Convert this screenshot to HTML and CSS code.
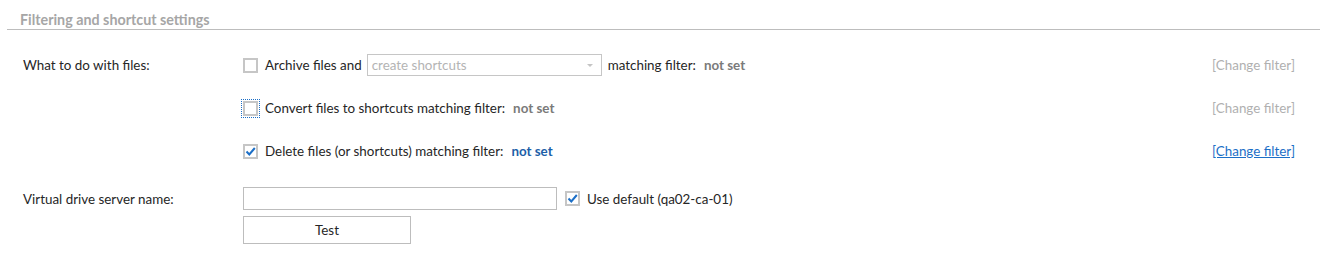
FILE: index.html
```html
<!DOCTYPE html>
<html lang="en">
<head>
    <meta charset="utf-8">
    <title>Filtering and shortcut settings</title>
    <link rel="stylesheet" href="styles.css">
</head>
<body>
    <div class="section-title">Filtering and shortcut settings</div>
    <div class="form">
        <div class="row">
            <div class="label">What to do with files:</div>
            <div class="field">
                <span class="check"></span>
                <span>Archive files and</span>
                <div class="select">
                    <span>create shortcuts</span>
                    <span class="arrow"></span>
                </div>
                <span>matching filter:</span>
                <b class="value">not set</b>
            </div>
            <a class="link disabled">[Change filter]</a>
        </div>
        <div class="row">
            <div class="label"></div>
            <div class="field">
                <span class="check focused"></span>
                <span>Convert files to shortcuts matching filter:</span>
                <b class="value">not set</b>
            </div>
            <a class="link disabled">[Change filter]</a>
        </div>
        <div class="row">
            <div class="label"></div>
            <div class="field">
                <span class="check checked">
                    <svg width="11" height="11" viewBox="0 0 11 11"><path d="M1.5 5.5 L4.3 8.5 L9.8 2" fill="none" stroke="#1c6fc7" stroke-width="2"/></svg>
                </span>
                <span>Delete files (or shortcuts) matching filter:</span>
                <b class="value active">not set</b>
            </div>
            <a class="link" href="#">[Change filter]</a>
        </div>

        <div class="row server">
            <div class="label">Virtual drive server name:</div>
            <div class="field">
                <input class="text" type="text">
                <span class="check checked">
                    <svg width="11" height="11" viewBox="0 0 11 11"><path d="M1.5 5.5 L4.3 8.5 L9.8 2" fill="none" stroke="#1c6fc7" stroke-width="2"/></svg>
                </span>
                <span>Use default (qa02-ca-01)</span>
            </div>
        </div>
        <div class="row buttons">
            <div class="label"></div>
            <div class="field">
                <button class="btn">Test</button>
            </div>
        </div>
    </div>
</body>
</html>
```

FILE: styles.css
```css
html, body {
    margin: 0;
    background: #fff;
}

body {
    font-family: Lato, "Liberation Sans", sans-serif;
    font-size: 13.4px;
    color: #262626;
}

.section-title {
    margin-left: 7px;
    padding: 11px 0 0 13px;
    height: 18px;
    border-bottom: 1px solid #bdbdbd;
    font-size: 14.3px;
    font-weight: bold;
    color: #a6a6a6;
}

.form {
    padding: 24px 25px 0 23px;
}

.row {
    display: grid;
    grid-template-columns: 220px 1fr auto;
    align-items: center;
    height: 22px;
    margin-bottom: 21px;
}

.row.server {
    height: 23px;
    margin-top: 25px;
    margin-bottom: 6px;
}

.row.buttons {
    height: 28px;
}

.field {
    display: flex;
    align-items: center;
    gap: 6px;
}

.check {
    box-sizing: border-box;
    width: 15px;
    height: 15px;
    border: 2px solid #c6c6c6;
    background: #fff;
    display: flex;
    align-items: center;
    justify-content: center;
    margin-right: 1px;
}

.check.focused {
    outline: 1px dotted #1c6fc7;
    outline-offset: 1px;
}

.select {
    box-sizing: border-box;
    width: 235px;
    height: 22px;
    border: 1px solid #c6c6c6;
    display: flex;
    align-items: center;
    justify-content: space-between;
    padding: 0 8px 0 4px;
    color: #b4b4b4;
    margin-left: -1px;
}

.arrow {
    width: 0;
    height: 0;
    border-left: 3px solid transparent;
    border-right: 3px solid transparent;
    border-top: 3px solid #c4c4c4;
}

.value {
    color: #7a7a7a;
    margin-left: 2px;
}

.value.active {
    color: #1d5fa8;
}

.link {
    color: #b0b0b0;
    text-decoration: none;
}

.link:not(.disabled) {
    color: #1c6fc7;
    text-decoration: underline;
}

.text {
    box-sizing: border-box;
    width: 314px;
    height: 23px;
    border: 1px solid #bdbdbd;
    margin: 0 2px 0 0;
    padding: 0 4px;
    outline: none;
}

.btn {
    box-sizing: border-box;
    width: 168px;
    height: 28px;
    border: 1px solid #bdbdbd;
    background: #fff;
    font-family: inherit;
    font-size: 13.4px;
    color: #262626;
}
```
